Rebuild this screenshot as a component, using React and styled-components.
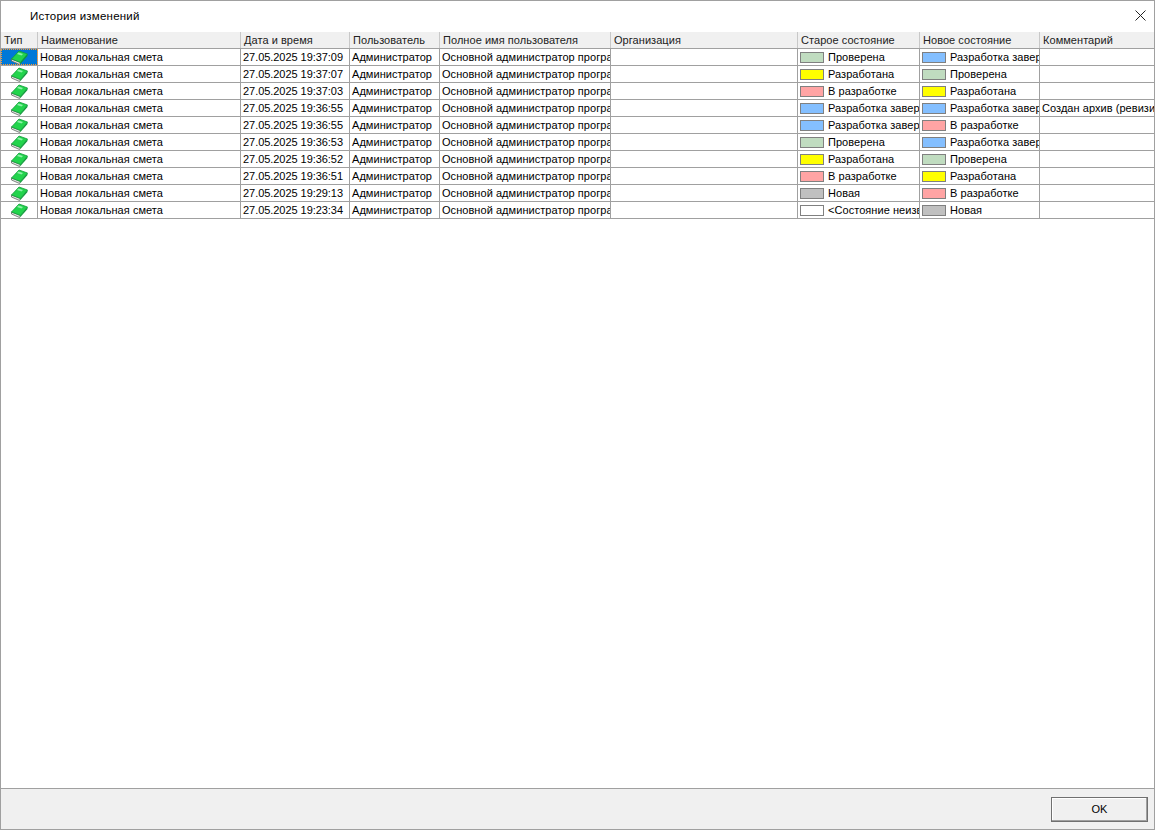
import React from 'react'
import styled, { createGlobalStyle } from 'styled-components'

const Global = createGlobalStyle`
  html, body { margin: 0; padding: 0; background: #fff; }
  body { font-family: "Liberation Sans", Arial, sans-serif; font-size: 11px; color: #000; }
`

const COLS = '37px 203px 109px 90px 171px 187px 122px 120px 115px'

const colors = {
  'Проверена': '#c0dcc0',
  'Разработана': '#ffff00',
  'В разработке': '#ffa4a4',
  'Разработка завершена': '#84bfff',
  'Новая': '#c0c0c0',
  '<Состояние неизвестно>': '#ffffff',
}

const rows = [
  ['27.05.2025 19:37:09', 'Проверена', 'Разработка завершена', ''],
  ['27.05.2025 19:37:07', 'Разработана', 'Проверена', ''],
  ['27.05.2025 19:37:03', 'В разработке', 'Разработана', ''],
  ['27.05.2025 19:36:55', 'Разработка завершена', 'Разработка завершена', 'Создан архив (ревизия 1)'],
  ['27.05.2025 19:36:55', 'Разработка завершена', 'В разработке', ''],
  ['27.05.2025 19:36:53', 'Проверена', 'Разработка завершена', ''],
  ['27.05.2025 19:36:52', 'Разработана', 'Проверена', ''],
  ['27.05.2025 19:36:51', 'В разработке', 'Разработана', ''],
  ['27.05.2025 19:29:13', 'Новая', 'В разработке', ''],
  ['27.05.2025 19:23:34', '<Состояние неизвестно>', 'Новая', ''],
]

const headers = ['Тип', 'Наименование', 'Дата и время', 'Пользователь', 'Полное имя пользователя', 'Организация', 'Старое состояние', 'Новое состояние', 'Комментарий']

function BookIcon() {
  return (
    <svg width="18" height="15" viewBox="0 0 18 15">
      <path d="M1.5 9 L1.5 11 L9.5 14.5 L10.5 12.5 Z" fill="#e4e4e4" stroke="#5f6b62" strokeWidth="0.8" />
      <path d="M1.5 9 L9 1 L17.5 4 L10.5 12.5 Z" fill="#22d44c" stroke="#119a3a" strokeWidth="0.8" />
      <path d="M8.5 2.5 L13 4 L11.5 5.5 L7 4 Z" fill="#8af2a6" />
      <path d="M10.5 12.5 L17.5 4 L17.5 6 L10 14.5 Z" fill="#0f9a3a" />
    </svg>
  )
}

function App() {
  return (
    <Dialog>
      <Global />
      <TitleBar>
        <Title>История изменений</Title>
        <CloseButton viewBox="0 0 11 11" aria-label="Закрыть">
          <path d="M0.5 0.5 L10.5 10.5 M10.5 0.5 L0.5 10.5" stroke="#222" strokeWidth="1" fill="none" />
        </CloseButton>
      </TitleBar>
      <Table>
        <HeaderRow>
          {headers.map((h) => <HeaderCell key={h}>{h}</HeaderCell>)}
        </HeaderRow>
        {rows.map((r, i) => (
          <Row key={i}>
            <IconCell $selected={i === 0}><BookIcon /></IconCell>
            <Cell>Новая локальная смета</Cell>
            <DateCell>{r[0]}</DateCell>
            <Cell>Администратор</Cell>
            <Cell>Основной администратор программы</Cell>
            <Cell />
            <StateCell><Swatch $color={colors[r[1]]} /><CellText>{r[1]}</CellText></StateCell>
            <StateCell><Swatch $color={colors[r[2]]} /><CellText>{r[2]}</CellText></StateCell>
            <Cell>{r[3]}</Cell>
          </Row>
        ))}
      </Table>
      <Footer>
        <OkButton>OK</OkButton>
      </Footer>
    </Dialog>
  )
}

const Dialog = styled.div`
  width: 1155px;
  height: 830px;
  box-sizing: border-box;
  border: 1px solid #a0a0a0;
  display: flex;
  flex-direction: column;
  overflow: hidden;
  background: #fff;
`
const TitleBar = styled.div`
  height: 29px;
  padding: 0 8px 2px 29px;
  flex: none;
  display: flex;
  align-items: center;
  justify-content: space-between;
`
const Title = styled.div`
  font-size: 11.5px;
  letter-spacing: 0.02em;
`
const CloseButton = styled.svg`
  width: 11px;
  height: 11px;
`
const Table = styled.div`
  flex: 1;
  overflow: hidden;
`
const HeaderRow = styled.div`
  display: grid;
  grid-template-columns: ${COLS};
  height: 16px;
  width: 1154px;
  background: #f0f0f0;
  border-bottom: 1px solid #a0a0a0;
`
const HeaderCell = styled.div`
  padding-left: 3px;
  line-height: 16px;
  color: #222;
  white-space: nowrap;
  overflow: hidden;
  box-sizing: border-box;
  border-right: 1px solid #c8c8c8;
  letter-spacing: 0.05px;
  &:last-child { border-right: none; }
`
const Row = styled.div`
  display: grid;
  grid-template-columns: ${COLS};
  height: 16px;
  border-bottom: 1px solid #a0a0a0;
`
const Cell = styled.div`
  box-sizing: border-box;
  padding-left: 2px;
  line-height: 16px;
  white-space: nowrap;
  overflow: hidden;
  border-right: 1px solid #a0a0a0;
  letter-spacing: 0.05px;
  &:last-child { border-right: none; }
`
const DateCell = styled(Cell)`
  letter-spacing: -0.05px;
`
const IconCell = styled.div`
  box-sizing: border-box;
  display: flex;
  align-items: center;
  justify-content: center;
  border-right: 1px solid #a0a0a0;
  background: ${(p) => (p.$selected ? '#0078d7' : '#fff')};
  outline: ${(p) => (p.$selected ? '1px dotted #ff9a30' : 'none')};
  outline-offset: -1px;
`
const StateCell = styled(Cell)`
  display: flex;
  align-items: center;
`
const Swatch = styled.span`
  flex: none;
  width: 22px;
  height: 9px;
  border: 1px solid #808080;
  background: ${(p) => p.$color};
  margin-right: 4px;
`
const CellText = styled.span`
  white-space: nowrap;
`
const Footer = styled.div`
  height: 40px;
  flex: none;
  background: #f0f0f0;
  border-top: 1px solid #a0a0a0;
  display: flex;
  align-items: center;
  justify-content: flex-end;
  padding-right: 6px;
`
const OkButton = styled.button`
  width: 97px;
  height: 25px;
  box-sizing: border-box;
  background: #f0f0f0;
  border: 1px solid #707070;
  box-shadow: inset -1px -1px 0 #a0a0a0, inset 1px 1px 0 #fff;
  font-family: inherit;
  font-size: 11px;
  font-weight: 400;
  padding: 0;
  color: #000;
`

export default App
